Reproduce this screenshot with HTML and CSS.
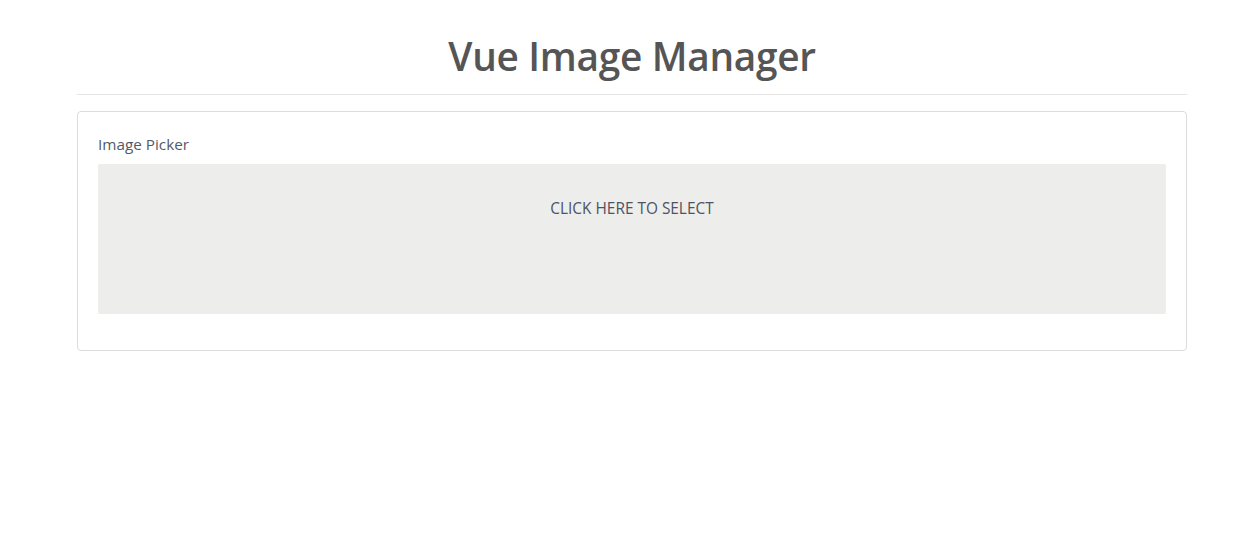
FILE: index.html
```html
<!DOCTYPE html>
<html>
<head>
<meta charset="utf-8">
<title>Vue Image Manager</title>
<link rel="stylesheet" href="styles.css">
</head>
<body>
<div class="container">
  <h1 class="title">Vue Image Manager</h1>
  <hr class="divider">
  <div class="card">
    <div class="card-body">
      <label class="field-label">Image Picker</label>
      <div class="picker">CLICK HERE TO SELECT</div>
    </div>
  </div>
</div>
</body>
</html>
```
FILE: styles.css
```css
html, body {
  margin: 0;
  padding: 0;
  background: #ffffff;
}
body {
  font-family: "Open Sans", "Noto Sans", sans-serif;
  color: #555555;
}
.container {
  width: 1110px;
  margin-left: 77px;
}
.title {
  margin: 0;
  padding-top: 31px;
  height: 55px;
  font-size: 38.8px;
  line-height: 50px;
  font-weight: 600;
  text-align: center;
  color: #555555;
  letter-spacing: -0.3px;
}
.divider {
  margin: 8px 0 0 0;
  border: 0;
  border-top: 1px solid #e5e5e5;
}
.card {
  margin-top: 16px;
  border: 1px solid #dcdcdc;
  border-radius: 4px;
  height: 238px;
}
.card-body {
  padding: 20px;
}
.field-label {
  display: block;
  font-size: 15.3px;
  line-height: 25px;
  color: #525a6a;
  margin-top: 0;
  margin-bottom: 7px;
}
.picker {
  height: 150px;
  box-sizing: border-box;
  padding-top: 35px;
  background: #ededeb;
  border-radius: 2px;
  text-align: center;
  font-size: 15.4px;
  line-height: 20px;
  color: #4e5462;
}
```
